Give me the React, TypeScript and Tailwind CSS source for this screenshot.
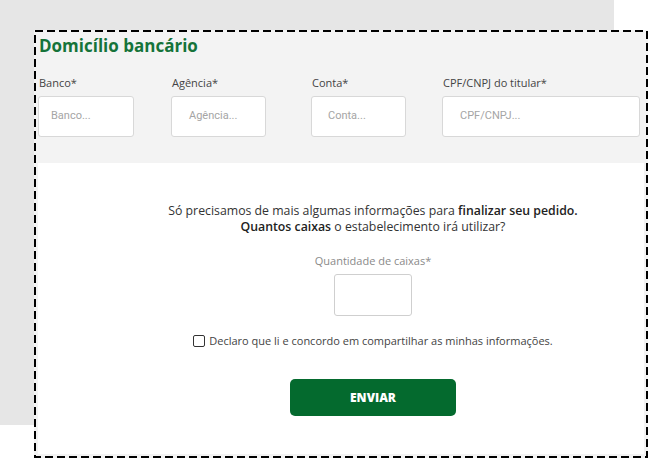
export default function App() {
  const font = { fontFamily: '"Open Sans", "Noto Sans", sans-serif' };
  return (
    <div className="relative w-[660px] h-[467px] bg-white overflow-hidden" style={font}>
      <div className="w-[614px] h-[425px] bg-[#e6e6e6]" />

      {/* selected frame */}
      <div className="absolute left-[34px] top-[30px] w-[614px] h-[428px] p-[2px] bg-[#f3f3f3] flex flex-col">
        <svg className="absolute inset-0 pointer-events-none" width="614" height="428">
          <rect x="1" y="1" width="612" height="426" fill="none" stroke="#000" strokeWidth="2" strokeDasharray="8 4" />
        </svg>
        <div className="pt-[2px] pb-[26px]">
          <h2 className="pl-[3px] h-[24px] leading-[24px] text-[17px] font-bold text-[#15733a]">
            Domicílio bancário
          </h2>
          <div className="flex mt-[18px]">
            <Field label="Banco*" placeholder="Banco..." className="ml-[2px] w-[96px]" pad="pl-[12px]" />
            <Field label="Agência*" placeholder="Agência..." className="ml-[37px] w-[95px]" pad="pl-[17px]" />
            <Field label="Conta*" placeholder="Conta..." className="ml-[45px] w-[95px]" pad="pl-[16px]" />
            <Field label="CPF/CNPJ do titular*" placeholder="CPF/CNPJ..." className="ml-[36px] w-[198px]" pad="pl-[17px]" />
          </div>
        </div>

        <div className="mx-[2px] mb-[2px] flex-1 bg-white flex flex-col items-center pl-[64px] pt-[40px]">
          <p className="text-[12.3px] leading-4 text-[#333] text-center">
            Só precisamos de mais algumas informações para{" "}
            <span className="font-semibold text-[#222]">finalizar seu pedido.</span>
            <br />
            <span className="font-semibold text-[#222]">Quantos caixas</span> o estabelecimento irá utilizar?
          </p>
          <label className="mt-[19px] text-[11px] leading-[14px] text-[#8a8a8a]">Quantidade de caixas*</label>
          <div className="mt-[6px] w-[78px] h-[42px] bg-white border border-[#cfcfcf] rounded-[3px]" />
          <div className="mt-[18px] flex items-center h-[14px]">
            <span className="w-[12px] h-[12px] border-[1.5px] border-[#333] rounded-[2px] mr-[4px]" />
            <span className="text-[11px] leading-[14px] text-[#444]">
              Declaro que li e concordo em compartilhar as minhas informações.
            </span>
          </div>
          <button className="mt-[31px] w-[166px] h-[37px] rounded-[5px] bg-[#046a2e] text-white text-[12px] font-extrabold">
            ENVIAR
          </button>
        </div>
      </div>
    </div>
  );
}

function Field({
  label,
  placeholder,
  className,
  pad,
}: {
  label: string;
  placeholder: string;
  className: string;
  pad: string;
}) {
  return (
    <div className={className}>
      <div className="pl-[1px] text-[11px] leading-[14px] text-[#444]">{label}</div>
      <div
        className={`mt-[6px] h-[41px] bg-white border border-[#d8d8d8] rounded-[3px] flex items-center ${pad} text-[11px] text-[#a5a5a5]`}
        style={{ fontFamily: 'Roboto, "Noto Sans", sans-serif' }}
      >
        {placeholder}
      </div>
    </div>
  );
}
